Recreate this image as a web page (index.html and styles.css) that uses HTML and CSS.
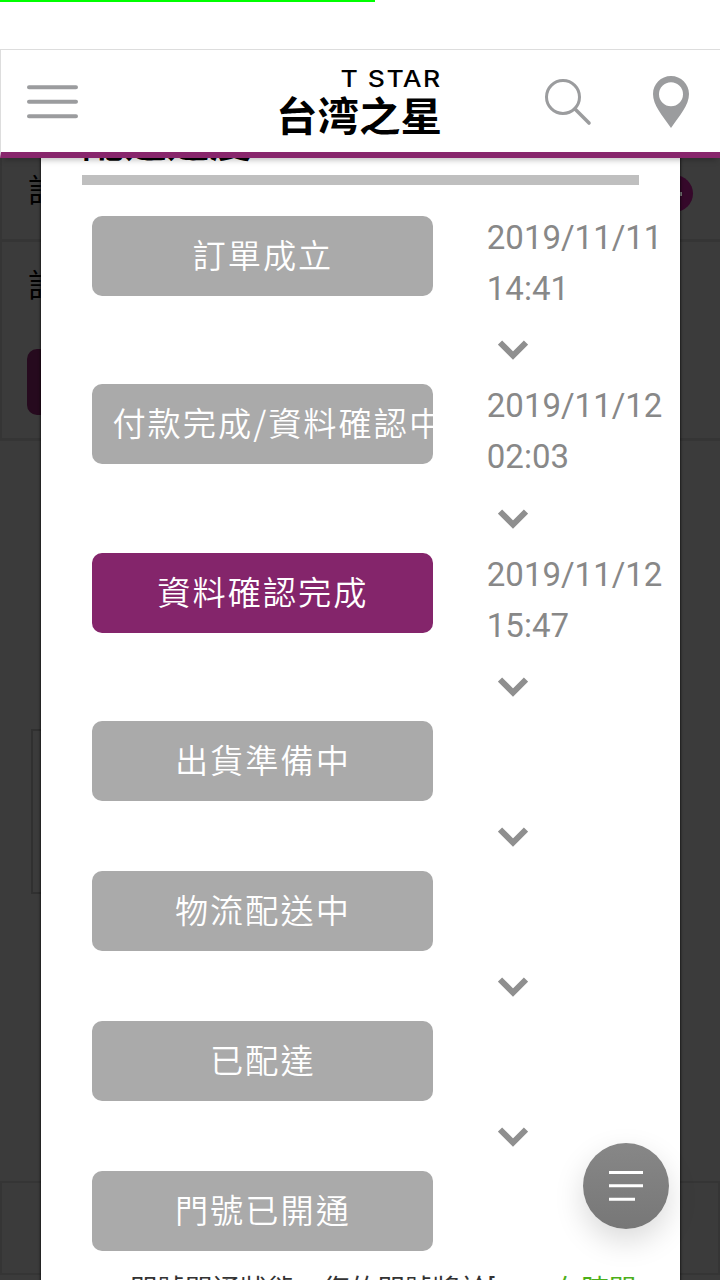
FILE: index.html
```
<!DOCTYPE html>
<html lang="zh-Hant">
<head>
    <meta charset="UTF-8">
    <meta name="viewport" content="width=device-width, initial-scale=1.0">
    <title>台湾之星</title>
    <link rel="stylesheet" href="styles.css">
</head>
<body>

<div class="progress"></div>

<header class="header">
    <svg class="menu-icon" width="54" height="36" viewBox="0 0 54 36">
        <path d="M3 3.3H50M3 17.7H50M3 32.3H50" stroke="#9b9c9e" stroke-width="4" stroke-linecap="round"/>
    </svg>
    <div class="logo">
        <span class="logo-en">T STAR</span>
        <span class="logo-zh">台湾之星</span>
    </div>
    <div class="header-tools">
        <svg width="48" height="48" viewBox="0 0 48 48" fill="none" stroke="#9b9c9e">
            <circle cx="19" cy="19" r="16.5" stroke-width="3"/>
            <path d="M31 31L45 45" stroke-width="3.6" stroke-linecap="round"/>
        </svg>
        <svg width="36" height="52" viewBox="0 0 36 52">
            <path fill="#9b9c9e" fill-rule="evenodd" d="M18 0C8 0 0 8 0 18C0 29 9 39 18 52C27 39 36 29 36 18C36 8 28 0 18 0ZM18 6.3A12 12 0 1 1 18 30.300A12 12 0 1 1 18 6.300Z"/>
        </svg>
    </div>
</header>

<main class="stage">
    <div class="backdrop">
        <div class="order-row first"><span>訂單</span><i class="toggle"></i></div>
        <div class="order-row second"><span>訂單</span><div class="order-button"></div></div>
        <div class="order-box"></div>
        <div class="order-footer"></div>
    </div>

    <section class="modal">
        <h2 class="modal-title">配送進度</h2>
        <div class="steps">
            <div class="step">
                <div class="step-name">訂單成立</div>
                <div class="step-time">2019/11/11<br>14:41</div>
            </div>
            <svg class="arrow" viewBox="0 0 30 20"><path d="M2 2.500L15 15.500L28 2.500"/></svg>
            <div class="step">
                <div class="step-name">付款完成/資料確認中</div>
                <div class="step-time">2019/11/12<br>02:03</div>
            </div>
            <svg class="arrow" viewBox="0 0 30 20"><path d="M2 2.500L15 15.500L28 2.500"/></svg>
            <div class="step">
                <div class="step-name active">資料確認完成</div>
                <div class="step-time">2019/11/12<br>15:47</div>
            </div>
            <svg class="arrow" viewBox="0 0 30 20"><path d="M2 2.500L15 15.500L28 2.500"/></svg>
            <div class="step">
                <div class="step-name">出貨準備中</div>
            </div>
            <svg class="arrow" viewBox="0 0 30 20"><path d="M2 2.500L15 15.500L28 2.500"/></svg>
            <div class="step">
                <div class="step-name">物流配送中</div>
            </div>
            <svg class="arrow" viewBox="0 0 30 20"><path d="M2 2.500L15 15.500L28 2.500"/></svg>
            <div class="step">
                <div class="step-name">已配達</div>
            </div>
            <svg class="arrow" viewBox="0 0 30 20"><path d="M2 2.500L15 15.500L28 2.500"/></svg>
            <div class="step">
                <div class="step-name">門號已開通</div>
            </div>
        </div>
        <p class="note">門號開通狀態，您的門號將於[<span>一一在時間</span></p>
    </section>
</main>

<button class="float-button">
    <svg width="34" height="32" viewBox="0 0 34 32">
        <path d="M0 2.500H34M0 15.700H34M0 29.200H26" stroke="#fff" stroke-width="3"/>
    </svg>
</button>

</body>
</html>
```
FILE: styles.css
```
* {
    box-sizing: border-box;
}
body {
    margin: 0;
    height: 1280px;
    overflow: hidden;
    position: relative;
    background: #fff;
    font-family: Roboto, "Noto Sans CJK TC", sans-serif;
}
.progress {
    width: 375px;
    height: 2px;
    background: #00ff00;
}
.header {
    position: relative;
    z-index: 2;
    display: flex;
    align-items: flex-start;
    justify-content: space-between;
    height: 109px;
    margin-top: 47px;
    padding: 0 31px 0 25px;
    background: #fff;
    border-top: 1px solid #ddd;
    border-left: 1px solid #ddd;
    border-bottom: 6px solid #88266c;
    box-shadow: 0 5px 6px -3px rgba(0, 0, 0, 0.25);
}
.menu-icon {
    margin-top: 34px;
}
.logo {
    width: 166px;
    margin: 17px 0 0 94px;
    display: flex;
    flex-direction: column;
    align-items: flex-end;
    color: #000;
    white-space: nowrap;
}
.logo-en {
    font: 500 22.500px/24px Inter, sans-serif;
    letter-spacing: 1.2px;
    transform: scaleX(1.18);
    transform-origin: right;
}
.logo-zh {
    font: bold 41.500px/46px "Noto Sans CJK JP", sans-serif;
    transform: scaleY(0.95);
}
.header-tools {
    display: flex;
    gap: 61px;
    margin-top: 26px;
}
.header-tools svg:first-child {
    margin-top: 2px;
}
.stage {
    position: relative;
    height: 1122px;
    overflow: hidden;
}
.backdrop {
    height: 100%;
    background: #3b3b3b;
    color: #000;
    font-size: 32px;
    line-height: 46px;
}
.order-row {
    display: flex;
    justify-content: space-between;
    border-left: 2px solid #353535;
    border-bottom: 3px solid #353535;
    padding-left: 26px;
}
.order-row.first {
    height: 84px;
    padding-top: 10px;
    padding-right: 27px;
}
.order-row.second {
    height: 199px;
    padding-top: 21px;
    flex-direction: column;
    justify-content: flex-start;
}
.toggle {
    display: flex;
    align-items: center;
    justify-content: center;
    width: 37px;
    height: 37px;
    margin-top: 7px;
    border-radius: 50%;
    background: #35082a;
}
.toggle::after {
    content: "";
    width: 15px;
    height: 4px;
    background: #777;
}
.order-button {
    width: 200px;
    height: 66px;
    margin: 40px 0 0 -1px;
    border-radius: 10px;
    background: #260a1e;
}
.order-box {
    width: 600px;
    height: 165px;
    margin: 288px 0 0 31px;
    border: 2px solid #303030;
}
.order-footer {
    height: 94px;
    margin-top: 287px;
    border: 2px solid #353535;
}
.modal {
    position: absolute;
    top: -60px;
    left: 41px;
    width: 639px;
    height: 1200px;
    padding: 0 41px;
    background: #fff;
    box-shadow: 0 0 3px #000;
}
.modal-title {
    height: 87px;
    margin: 0;
    padding-top: 14px;
    border-bottom: 10px solid #bfbfbf;
    font-size: 42.500px;
    line-height: 62px;
    color: #000;
}
.steps {
    padding: 30.700px 0 0 10.400px;
}
.step {
    display: flex;
    gap: 54px;
}
.step-name {
    flex: none;
    width: 341px;
    height: 80px;
    padding: 0 20px;
    border-radius: 10px;
    background: #aaa;
    color: #fff;
    font-family: "Noto Sans CJK TC", sans-serif;
    font-size: 33.200px;
    font-weight: 350;
    letter-spacing: 2px;
    line-height: 76px;
    text-align: center;
    white-space: nowrap;
    overflow: hidden;
}
.step-name.active {
    background: #84256b;
}
.step-time {
    margin: -4px 0 0 -0.600px;
    height: 102.500px;
    color: #888;
    font-size: 33px;
    line-height: 51.300px;
}
.arrow {
    display: block;
    width: 30px;
    height: 20px;
    margin: 26px 0 24px 405.500px;
    fill: none;
    stroke: #8f8f8f;
    stroke-width: 6;
}
.note {
    margin: 19px 0 0 48px;
    font-size: 27.500px;
    line-height: 40px;
    color: #333;
    white-space: nowrap;
}
.note span {
    margin-left: 4px;
    color: #4caf1a;
}
.float-button {
    position: absolute;
    z-index: 3;
    left: 583px;
    top: 1143px;
    width: 86px;
    height: 86px;
    padding: 0;
    display: flex;
    align-items: center;
    justify-content: center;
    border: none;
    border-radius: 50%;
    background: linear-gradient(#878787, #777);
    box-shadow: 0 12px 30px rgba(0, 0, 0, 0.15);
}
```
